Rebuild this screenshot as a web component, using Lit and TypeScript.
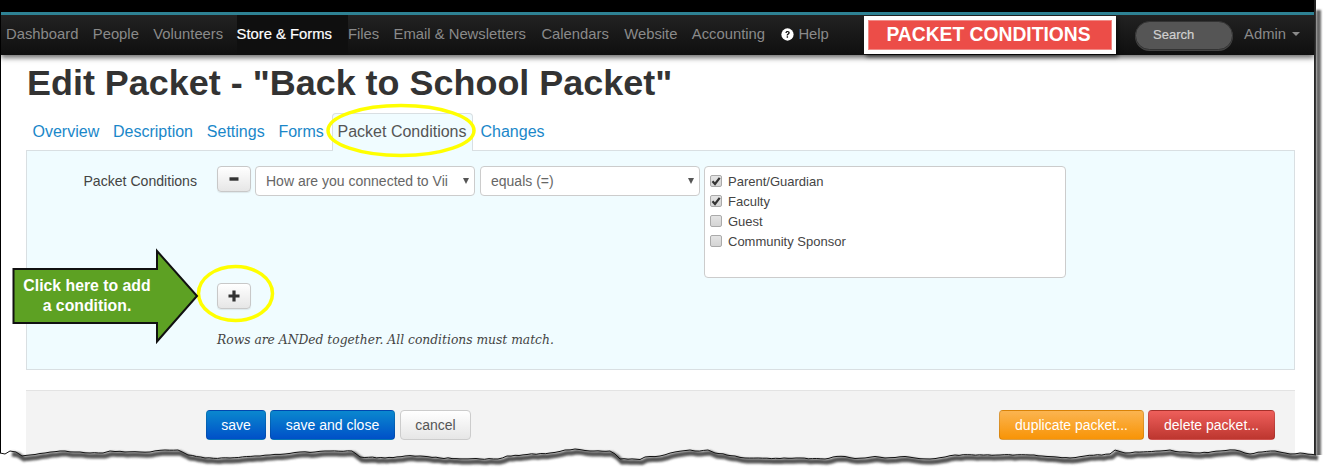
import { LitElement, html, css, svg } from "lit";
import { customElement } from "lit/decorators.js";

const navItems = ["Dashboard", "People", "Volunteers", "Store & Forms", "Files", "Email & Newsletters", "Calendars", "Website", "Accounting"];
const tabs = ["Overview", "Description", "Settings", "Forms", "Packet Conditions", "Changes"];
const options = [
  { label: "Parent/Guardian", checked: true },
  { label: "Faculty", checked: true },
  { label: "Guest", checked: false },
  { label: "Community Sponsor", checked: false },
];
const rawTear: [number, number][] = [[0,453],[5,454],[10,451],[16,452],[22,456],[30,455],[45,453],[60,451],[75,452],[90,453],[103,453],[110,451],[125,452],[140,452],[150,452],[165,450],[178,450],[188,455],[205,458],[230,458],[255,456],[270,455],[285,454],[300,452],[315,452],[330,451],[352,451],[360,457],[385,458],[405,456],[420,456],[440,458],[480,459],[498,459],[507,456],[527,454.5],[550,453],[565,450],[575,449],[590,451],[610,451],[615,454],[620,459],[640,459.5],[645,457],[660,456],[675,452],[690,450],[695,451],[708,450],[715,453],[735,456],[745,458],[780,458.5],[800,458],[825,459],[833,457],[845,456.5],[855,458.5],[865,458],[875,456.5],[885,458],[895,457.5],[905,456.5],[915,458],[930,459],[945,457],[955,455],[1000,455],[1030,455],[1070,458],[1085,456],[1110,454],[1115,450],[1125,453],[1135,452],[1160,451],[1170,450],[1180,452],[1200,453],[1220,451],[1235,450],[1250,454],[1262,452],[1275,451],[1290,454],[1300,453],[1316,455]];
// Roughen the torn edge with a small repeatable jitter.
const tear: [number, number][] = [];
rawTear.forEach((p, i) => {
  tear.push(p);
  const q = rawTear[i + 1];
  if (!q) return;
  const steps = Math.max(1, Math.floor((q[0] - p[0]) / 4));
  for (let s = 1; s < steps; s++) {
    const t = s / steps;
    const n = Math.sin((p[0] + s) * 12.9898) * 43758.5453;
    const j = (n - Math.floor(n) - 0.5) * 0.9;
    tear.push([p[0] + (q[0] - p[0]) * t, +(p[1] + (q[1] - p[1]) * t + j).toFixed(1)]);
  }
});
const tearLine = tear.map((p) => p.join(",")).join(" ");
const tearFill = `0,475 ${tearLine} 1330,455 1330,475`;
const tearShadow = tear.filter((p) => p[0] > 6).map((p) => `${p[0] + 2},${p[1] + 3}`).join(" ");

@customElement("app-root")
export class AppRoot extends LitElement {
  static styles = css`
    :host { display: block; width: 1330px; height: 475px; position: relative; overflow: hidden; background: #fff; font-family: "Liberation Sans", Arial, sans-serif; color: #333; }
    .frame { width: 1316px; height: 475px; box-sizing: border-box; border-left: 1px solid #000; border-right: 2px solid #222; display: flex; flex-direction: column; background: #fff; }
    .black { height: 12px; background: #000; flex: none; }
    .navbar { height: 40px; flex: none; border-top: 3px solid #2e8294; background: linear-gradient(#222, #0f0f0f); display: flex; align-items: stretch; font-size: 14.8px; color: #8a8a8a; box-shadow: 0 3px 5px rgba(0,0,0,.55); padding-left: 5px; position: relative; }
    .navitem { display: flex; align-items: center; padding: 0 15.4px 2px 0; white-space: nowrap; }
    .navitem:nth-child(1), .navitem:nth-child(2), .navitem:nth-child(5), .navitem:nth-child(8) { padding-right: 14.4px; }
    .navitem:nth-child(3) { padding-right: 13.4px; }
    .navitem:nth-child(9) { padding-right: 16.4px; }
    .navitem.active { color: #fff; background: #0f0f0f; -webkit-text-stroke: .2px #fff; padding-right: 16px; }
    .help { display: flex; align-items: center; gap: 4px; padding-bottom: 2px; }
    .help svg { width: 13px; height: 13px; }
    .search { width: 98px; height: 29px; box-sizing: border-box; border-radius: 14.5px; background: #555; border: 1px solid #333; box-shadow: 0 1px 0 #444; color: #d0d0d0; font-size: 13px; display: flex; align-items: center; padding: 0 0 2px 17px; margin: 6px 0 0 0; -webkit-text-stroke: .2px #d0d0d0; }
    .spacer { flex: 1; }
    .admin { display: flex; align-items: center; gap: 6px; padding: 0 14px 2px 11px; }
    .caret { width: 0; height: 0; border-left: 4px solid transparent; border-right: 4px solid transparent; border-top: 4px solid #8a8a8a; }
    .content { padding: 0 19px 0 25px; flex: 1; display: flex; flex-direction: column; }
    h1 { margin: 8px 0 0 1px; font-size: 35.95px; line-height: 40px; font-weight: 700; color: #333; white-space: nowrap; }
    .tabs { display: flex; margin-top: 10px; height: 38px; font-size: 16px; color: #1a87c9; padding-left: 6.5px; box-sizing: border-box; }
    .tab { padding-top: 10px; margin-right: 13.8px; white-space: nowrap; }
    .tab.active { color: #555; background: #f0fcff; border: 1px solid #d9dfe2; border-bottom: none; border-radius: 4px 4px 0 0; margin: 0 8px 0 -6px; padding: 9px 5px 0 5px; position: relative; z-index: 1; height: 38px; box-sizing: border-box; }
    .panel { height: 220px; box-sizing: border-box; background: #f0fcff; border: 1px solid #d9dfe2; margin-top: -1px; display: flex; flex-direction: column; padding: 15px 0 0 0; font-size: 13px; }
    .row { display: flex; align-items: flex-start; }
    .label { width: 170px; text-align: right; padding-top: 7px; color: #444; font-size: 14.1px; line-height: 16px; box-sizing: border-box; flex: none; white-space: nowrap; }
    .btn { width: 34px; height: 26px; box-sizing: border-box; border: 1px solid #c8c8c8; border-radius: 4px; background: linear-gradient(#fff, #e6e6e6); display: flex; align-items: center; justify-content: center; box-shadow: 0 1px 1px rgba(0,0,0,.08); }
    .btn svg { width: 12px; height: 12px; }
    .minus { margin-left: 20px; }
    .select { height: 30px; box-sizing: border-box; background: #fff; border: 1px solid #ccc; border-radius: 4px; font-size: 14px; color: #666; display: flex; align-items: center; padding-left: 10px; position: relative; overflow: hidden; white-space: nowrap; }
    .s1 { width: 220px; margin-left: 4px; }
    .s2 { width: 220px; margin-left: 5px; }
    .arrow { position: absolute; right: 5px; top: 11px; width: 0; height: 0; border-left: 3px solid transparent; border-right: 3px solid transparent; border-top: 6px solid #555; }
    .checks { width: 362px; height: 112px; box-sizing: border-box; background: #fff; border: 1px solid #ccc; border-radius: 4px; margin-left: 4px; padding: 4px 0 0 5px; font-size: 13px; color: #444; }
    .opt { display: flex; align-items: center; height: 20px; gap: 6px; }
    .cb { width: 12px; height: 12px; box-sizing: border-box; border: 1px solid #aaa; border-radius: 2px; background: linear-gradient(#e4e4e4, #d4d4d4); display: flex; align-items: center; justify-content: center; }
    .cb svg { width: 10px; height: 10px; }
    .plus { margin: 5px 0 0 190px; }
    .note { margin: 24px 0 0 190px; font-family: "DejaVu Serif", "Liberation Serif", serif; font-style: italic; font-size: 12.3px; color: #444; white-space: nowrap; }
    .footer { margin-top: 20px; height: 70px; flex: none; background: #f3f3f3; border-top: 1px solid #e3e3e3; display: flex; align-items: flex-start; padding: 19px 20px 0 180px; gap: 4px; box-sizing: border-box; }
    .fbtn { height: 30px; box-sizing: border-box; border-radius: 4px; font-size: 14px; color: #fff; display: flex; align-items: center; justify-content: center; white-space: nowrap; border: 1px solid rgba(0,0,0,.12); }
    .blue { background: linear-gradient(#0a88cf, #0050c8); }
    .cancel { background: linear-gradient(#fff, #e6e6e6); color: #555; border-color: #ccc; margin-left: 1px; width: 71px; }
    .orange { background: linear-gradient(#fbb450, #f89406); width: 145px; }
    .red { background: linear-gradient(#ee5f5b, #bd362f); width: 127px; }
    .w-save { width: 60px; }
    .w-close { width: 125px; }
    .grow { flex: 1; }
    .callout { position: absolute; left: 864px; top: 16px; width: 252px; height: 38px; box-sizing: border-box; border: 4px solid #fff; background: #ec4d48; box-shadow: inset 0 0 0 1px #f08a86, 2px 3px 4px rgba(0,0,0,.55); color: #fff; font-size: 19.3px; font-weight: 700; display: flex; align-items: center; justify-content: center; padding-right: 3px; }
    .overlay { position: absolute; left: 0; top: 0; width: 1330px; height: 475px; pointer-events: none; z-index: 2; }
    .arrowtext { position: absolute; left: 14px; top: 276px; width: 146px; text-align: center; color: #fff; font-size: 15.8px; line-height: 19.5px; font-weight: 700; z-index: 3; }
  `;

  render() {
    return html`
      <div class="frame">
        <div class="black"></div>
        <div class="navbar">
          ${navItems.map((n) => html`<div class="navitem ${n === "Store & Forms" ? "active" : ""}">${n}</div>`)}
          <div class="help">
            <svg viewBox="0 0 14 14"><circle cx="7" cy="7" r="6.6" fill="#fff"/><path d="M4.7 5.4C4.8 3.9 5.8 3.2 7.1 3.2c1.4 0 2.3.8 2.3 1.9 0 1-.6 1.4-1.2 1.8-.6.4-.7.6-.7 1.2H6.1c0-1 .2-1.4 1-1.9.5-.3.8-.6.8-1 0-.5-.3-.8-.8-.8-.6 0-.9.4-1 1z M6.1 9h1.5v1.6H6.1z" fill="#111"/></svg>
            Help
          </div>
          <div class="spacer"></div>
          <div class="search">Search</div>
          <div class="admin">Admin <span class="caret"></span></div>
        </div>
        <div class="content">
          <h1>Edit Packet - "Back to School Packet"</h1>
          <div class="tabs">
            ${tabs.map((t) => html`<div class="tab ${t === "Packet Conditions" ? "active" : ""}">${t}</div>`)}
          </div>
          <div class="panel">
            <div class="row">
              <div class="label">Packet Conditions</div>
              <div class="btn minus"><svg viewBox="0 0 12 12"><rect x="1.5" y="4.3" width="9" height="3.4" fill="#333"/></svg></div>
              <div class="select s1">How are you connected to Vii<span class="arrow"></span></div>
              <div class="select s2">equals (=)<span class="arrow"></span></div>
              <div class="checks">
                ${options.map((o) => html`<div class="opt"><span class="cb">${o.checked ? html`<svg viewBox="0 0 10 10"><path d="M1.5 5.2 4 8 8.7 1.8" fill="none" stroke="#333" stroke-width="2.2"/></svg>` : ""}</span>${o.label}</div>`)}
              </div>
            </div>
            <div class="plus btn"><svg viewBox="0 0 12 12"><path d="M4.4 .5h3.2v3.9h3.9v3.2H7.6v3.9H4.4V7.6H.5V4.4h3.9z" fill="#333"/></svg></div>
            <div class="note">Rows are ANDed together. All conditions must match.</div>
          </div>
          <div class="footer">
            <div class="fbtn blue w-save">save</div>
            <div class="fbtn blue w-close">save and close</div>
            <div class="fbtn cancel">cancel</div>
            <div class="grow"></div>
            <div class="fbtn orange">duplicate packet...</div>
            <div class="fbtn red">delete packet...</div>
          </div>
        </div>
      </div>
      <div class="callout">PACKET CONDITIONS</div>
      <svg class="overlay" viewBox="0 0 1330 475">
        ${svg`
          <defs><filter id="blur" filterUnits="userSpaceOnUse" x="0" y="0" width="1330" height="475"><feGaussianBlur stdDeviation="1.1"/></filter></defs>
          <rect x="1316" y="10" width="5" height="448" fill="#666" filter="url(#blur)"/>
          <polygon points=${tearFill} fill="#fff"/>
          <polyline points=${tearShadow} fill="none" stroke="#555" stroke-width="5" filter="url(#blur)"/>
          <polyline points=${tearLine} fill="none" stroke="#111" stroke-width="1"/>
          <ellipse cx="401" cy="130.5" rx="73" ry="25" fill="none" stroke="#ffff00" stroke-width="3.5"/>
          <ellipse cx="235.5" cy="293.5" rx="37" ry="27" fill="none" stroke="#ffff00" stroke-width="3.5"/>
          <polygon points="13.5,269 157,269 157,251 197,296 157,341.5 157,323 13.5,323" fill="#5da123" stroke="#111" stroke-width="2"/>
        `}
      </svg>
      <div class="arrowtext">Click here to add<br />a condition.</div>
    `;
  }
}
